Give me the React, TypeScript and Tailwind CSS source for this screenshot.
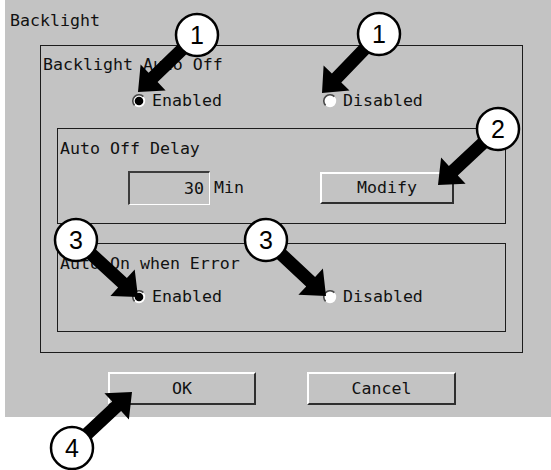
import React from "react";

const Radio = ({ checked }: { checked?: boolean }) => (
  <svg width="14" height="14" viewBox="0 0 14 14" className="shrink-0">
    <circle cx="7" cy="7" r="6.2" fill="#fff" />
    <path d="M2.6 11.4 A6.2 6.2 0 0 1 11.4 2.6" stroke="#4a4a4a" strokeWidth="1.6" fill="none" />
    {checked && <circle cx="7" cy="7" r="4.3" fill="#000" />}
  </svg>
);

const RadioItem = ({ checked, label }: { checked?: boolean; label: string }) => (
  <div className="flex items-center gap-[6px]">
    <Radio checked={checked} />
    <span>{label}</span>
  </div>
);

type Callout = { n: string; cx: number; cy: number; tx: number; ty: number };

const callouts: Callout[] = [
  { n: "1", cx: 197, cy: 35, tx: 138, ty: 92 },
  { n: "1", cx: 379, cy: 34, tx: 322, ty: 93 },
  { n: "2", cx: 498, cy: 129, tx: 438, ty: 185 },
  { n: "3", cx: 76, cy: 240, tx: 138, ty: 297 },
  { n: "3", cx: 266, cy: 240, tx: 326, ty: 296 },
  { n: "4", cx: 72, cy: 448, tx: 132, ty: 392 },
];

function arrowPoints(c: Callout) {
  const dx = c.tx - c.cx;
  const dy = c.ty - c.cy;
  const L = Math.sqrt(dx * dx + dy * dy);
  const ux = dx / L;
  const uy = dy / L;
  const nx = -uy;
  const ny = ux;
  const headLen = 21;
  const headHalf = 18;
  const shaft = 6.5;
  const bx = c.tx - ux * headLen;
  const by = c.ty - uy * headLen;
  const pts = [
    [c.cx + nx * shaft, c.cy + ny * shaft],
    [bx + nx * shaft, by + ny * shaft],
    [bx + nx * headHalf, by + ny * headHalf],
    [c.tx, c.ty],
    [bx - nx * headHalf, by - ny * headHalf],
    [bx - nx * shaft, by - ny * shaft],
    [c.cx - nx * shaft, c.cy - ny * shaft],
  ];
  return pts.map((p) => `${p[0].toFixed(1)},${p[1].toFixed(1)}`).join(" ");
}

export default function App() {
  return (
    <div className="relative w-[551px] h-[470px] bg-white overflow-hidden text-[#111] font-['DejaVu_Sans_Mono',monospace] text-[16.6px] leading-[24px]">
      <div className="ml-[5px] w-[546px] h-[417px] bg-[#c3c3c3] flex flex-col">
        <div className="pt-[9px] pl-[5px] h-[33px]">Backlight</div>
        <div className="mt-[12px] ml-[35px] w-[483px] h-[308px] border border-[#1c1c1c] flex flex-col shrink-0">
          <div className="pt-[7px] pl-[2px]">Backlight Auto Off</div>
          <div className="mt-[12px] h-[24px] flex items-center pl-[91px]">
            <RadioItem checked label="Enabled" />
            <div className="ml-[101px]">
              <RadioItem label="Disabled" />
            </div>
          </div>
          <div className="mt-[15px] ml-[16px] w-[449px] h-[96px] border border-[#1c1c1c] flex flex-col shrink-0">
            <div className="pt-[8px] pl-[2px]">Auto Off Delay</div>
            <div className="mt-[10px] h-[34px] flex items-center pl-[70px]">
              <div className="w-[82px] h-[34px] border-t-2 border-l-2 border-b border-r border-t-[#3c3c3c] border-l-[#3c3c3c] border-b-white border-r-white flex items-center justify-end pr-[5px]">
                30
              </div>
              <span className="ml-[4px]">Min</span>
              <div className="ml-[76px] w-[134px] h-[32px] border-2 border-t-white border-l-white border-b-[#2e2e2e] border-r-[#2e2e2e] flex items-center justify-center">
                Modify
              </div>
            </div>
          </div>
          <div className="mt-[19px] ml-[16px] w-[449px] h-[89px] border border-[#1c1c1c] flex flex-col shrink-0">
            <div className="pt-[8px] pl-[2px]">Auto On when Error</div>
            <div className="mt-[9px] h-[24px] flex items-center pl-[74px]">
              <RadioItem checked label="Enabled" />
              <div className="ml-[101px]">
                <RadioItem label="Disabled" />
              </div>
            </div>
          </div>
        </div>
        <div className="mt-[19px] ml-[103px] flex">
          <div className="w-[148px] h-[33px] border-2 border-t-white border-l-white border-b-[#2e2e2e] border-r-[#2e2e2e] flex items-center justify-center">
            OK
          </div>
          <div className="ml-[51px] w-[149px] h-[33px] border-2 border-t-white border-l-white border-b-[#2e2e2e] border-r-[#2e2e2e] flex items-center justify-center">
            Cancel
          </div>
        </div>
      </div>
      <svg className="absolute inset-0 pointer-events-none" width="551" height="470" viewBox="0 0 551 470">
        {callouts.map((c, i) => (
          <g key={i}>
            <polygon points={arrowPoints(c)} fill="#000" />
            <circle cx={c.cx} cy={c.cy} r="21" fill="#fff" stroke="#000" strokeWidth="2.5" />
            <text
              x={c.cx}
              y={c.cy + 9}
              textAnchor="middle"
              fontFamily="'Liberation Sans', Arial, sans-serif"
              fontSize="25"
              fill="#000"
            >
              {c.n}
            </text>
          </g>
        ))}
      </svg>
    </div>
  );
}
